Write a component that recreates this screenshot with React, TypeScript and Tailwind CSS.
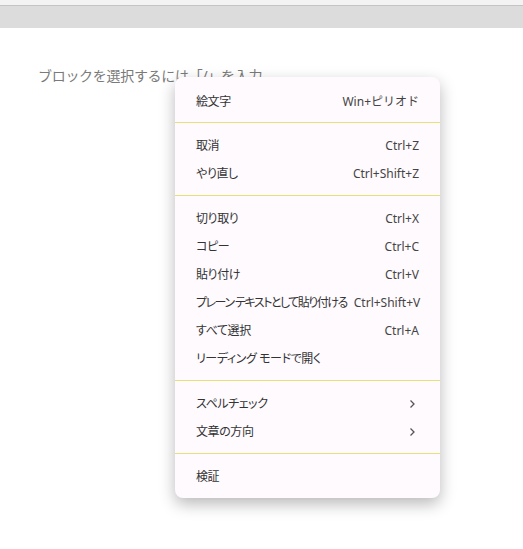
import { FC } from "react"

type MenuItem = {
	label: string
	shortcut?: string
	submenu?: boolean
	tight?: boolean
}

// context menu groups, split by separators
const groups: MenuItem[][] = [
	[{ label: "絵文字", shortcut: "Win+ピリオド" }],
	[
		{ label: "取消", shortcut: "Ctrl+Z" },
		{ label: "やり直し", shortcut: "Ctrl+Shift+Z" },
	],
	[
		{ label: "切り取り", shortcut: "Ctrl+X" },
		{ label: "コピー", shortcut: "Ctrl+C" },
		{ label: "貼り付け", shortcut: "Ctrl+V" },
		{ label: "プレーン テキストとして貼り付ける", shortcut: "Ctrl+Shift+V", tight: true },
		{ label: "すべて選択", shortcut: "Ctrl+A" },
		{ label: "リーディング モードで開く" },
	],
	[
		{ label: "スペルチェック", submenu: true },
		{ label: "文章の方向", submenu: true },
	],
	[{ label: "検証" }],
]

const Chevron: FC = () => (
	<svg width="7" height="10" viewBox="0 0 7 10" className="mr-[3px]">
		<path d="M1.5 1.5 L5 5 L1.5 8.5" fill="none" stroke="#555" strokeWidth="1.3" />
	</svg>
)

const MenuRow: FC<{ item: MenuItem }> = ({ item }) => (
	<div className="flex h-7 items-center justify-between gap-[7px] whitespace-nowrap pl-[21px] pr-[21px] pt-[2px]">
		<span
			className={
				item.tight
					? "text-[#333] tracking-[-1.5px] [font-feature-settings:'palt']"
					: "text-[#333] tracking-[-0.4px] [font-feature-settings:'palt']"
			}
		>
			{item.label}
		</span>
		{item.shortcut && <span className="text-[#444]">{item.shortcut}</span>}
		{item.submenu && <Chevron />}
	</div>
)

const App: FC = () => {
	return (
		<div
			className="relative h-[549px] w-full overflow-hidden bg-white"
			style={{ fontFamily: '"Noto Sans", "Noto Sans CJK JP", sans-serif' }}
		>
			<div className="h-[5px] bg-[#f3f3f3]" />
			<div className="h-[23px] border-t border-[#c4c4c4] bg-[#dcdcdc]" />

			<p className="pl-[38px] pt-[37px] text-[14px] leading-[22px] tracking-[-0.3px] text-[#7a7a7a]">
				ブロックを選択するには「/」を入力
			</p>

			<div className="absolute left-[175px] top-[77px] w-[265px] rounded-lg bg-[#fefafe] text-[12px] shadow-[0_6px_16px_rgba(0,0,0,0.28)]">
				{groups.map((group, i) => (
					<div
						key={i}
						className={
							i === 0
								? "pb-[7px] pt-[10px]"
								: "border-t border-[#e6e07a] py-2"
						}
					>
						{group.map((item) => (
							<MenuRow key={item.label} item={item} />
						))}
					</div>
				))}
			</div>
		</div>
	)
}

export default App
